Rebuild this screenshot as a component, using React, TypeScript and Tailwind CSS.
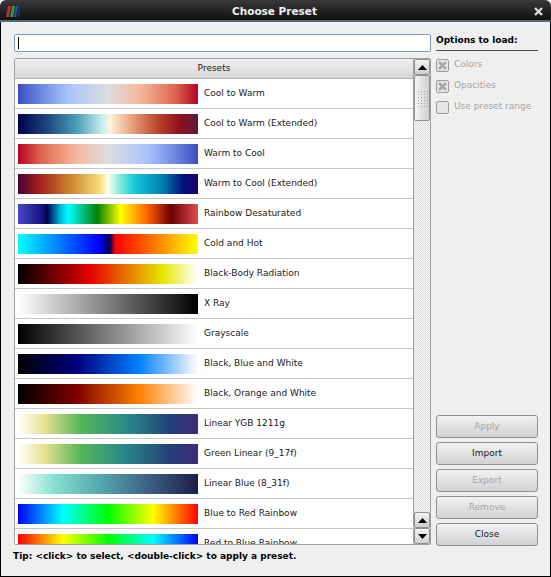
import React from 'react';

const presets = [
  {name: 'Cool to Warm', bar: 'bg-[linear-gradient(90deg,#3b4cc0_0%,#6a85e0_12%,#a9c4fd_28%,#dddddd_50%,#f5b79c_68%,#e0674f_87%,#b40426_100%)]'},
  {name: 'Cool to Warm (Extended)', bar: 'bg-[linear-gradient(90deg,#00004b_0%,#1f4a80_17%,#4fa0b8_33%,#c8eeee_47%,#fff4df_51%,#e8a27c_63%,#b8432a_78%,#8f1020_90%,#591a3a_100%)]'},
  {name: 'Warm to Cool', bar: 'bg-[linear-gradient(90deg,#b40426_0%,#e0674f_13%,#f5b79c_32%,#dddddd_50%,#a9c4fd_72%,#6a85e0_88%,#3b4cc0_100%)]'},
  {name: 'Warm to Cool (Extended)', bar: 'bg-[linear-gradient(90deg,#4a0032_0%,#a3201c_12%,#d08a30_30%,#f8e080_46%,#fffff0_50%,#9deedd_55%,#10c8d8_65%,#0080b0_80%,#00107e_92%,#200070_100%)]'},
  {name: 'Rainbow Desaturated', bar: 'bg-[linear-gradient(90deg,#4848c8_0%,#10107a_14%,#000050_16%,#00c0e0_24%,#00ffff_28%,#008000_44%,#ffff00_57%,#ff6000_72%,#6b0000_85%,#e04c4c_100%)]'},
  {name: 'Cold and Hot', bar: 'bg-[linear-gradient(90deg,#00ffff_0%,#0000ff_45%,#000050_51%,#ff0000_54%,#ffff00_100%)]'},
  {name: 'Black-Body Radiation', bar: 'bg-[linear-gradient(90deg,#000000_0%,#e60000_40%,#e6e600_80%,#ffffff_100%)]'},
  {name: 'X Ray', bar: 'bg-[linear-gradient(90deg,#ffffff_0%,#000000_100%)]'},
  {name: 'Grayscale', bar: 'bg-[linear-gradient(90deg,#000000_0%,#ffffff_100%)]'},
  {name: 'Black, Blue and White', bar: 'bg-[linear-gradient(90deg,#000000_0%,#000080_33%,#0080ff_67%,#ffffff_100%)]'},
  {name: 'Black, Orange and White', bar: 'bg-[linear-gradient(90deg,#000000_0%,#800000_33%,#ff8000_67%,#ffffff_100%)]'},
  {name: 'Linear YGB 1211g', bar: 'bg-[linear-gradient(90deg,#ffffff_0%,#e8e090_15%,#54b658_35%,#2a8a88_60%,#223f78_85%,#3f2b78_100%)]'},
  {name: 'Green Linear (9_17f)', bar: 'bg-[linear-gradient(90deg,#ffffff_0%,#e8e090_15%,#54b658_35%,#2a8a88_58%,#223f78_85%,#3f2b78_100%)]'},
  {name: 'Linear Blue (8_31f)', bar: 'bg-[linear-gradient(90deg,#ffffff_0%,#86e0d0_20%,#58a8b0_45%,#3a5a80_75%,#1c1c48_100%)]'},
  {name: 'Blue to Red Rainbow', bar: 'bg-[linear-gradient(90deg,#0000ff_0%,#00ffff_25%,#00ff00_50%,#ffff00_75%,#ff0000_100%)]'},
  {name: 'Red to Blue Rainbow', bar: 'bg-[linear-gradient(90deg,#ff0000_0%,#ffff00_25%,#00ff00_50%,#00ffff_75%,#0000ff_100%)]'},
];

const Arrow = ({down}: {down?: boolean}) => (
  <svg width="9" height="5" viewBox="0 0 9 5">
    <path d={down ? 'M0 0H9L4.5 5Z' : 'M0 5H9L4.5 0Z'} fill="#000" />
  </svg>
);

const ScrollButton = ({down}: {down?: boolean}) => (
  <div className="h-[16px] flex items-center justify-center border border-[#8f8f8f] rounded-[2px] bg-gradient-to-b from-[#f4f4f4] to-[#cfcfd2]">
    <Arrow down={down} />
  </div>
);

const Option = ({label, checked}: {label: string; checked?: boolean}) => (
  <div className="h-[14px] flex items-center gap-[5px] text-[9px] text-[#a6a6a6]">
    <div className="w-[13px] h-[13px] flex items-center justify-center border border-[#9c9c9c] rounded-[2px] bg-[#e6e6e6]">
      {checked && (
        <svg width="9" height="9" viewBox="0 0 9 9">
          <path d="M1 1L8 8M8 1L1 8" stroke="#a8a8a8" strokeWidth="2.6" />
        </svg>
      )}
    </div>
    <span>{label}</span>
  </div>
);

const ActionButton = ({label, disabled}: {label: string; disabled?: boolean}) => (
  <button
    className={`h-[23px] w-full border border-[#8f8f8f] rounded-[3px] bg-gradient-to-b from-[#f2f2f2] to-[#d2d2d5] text-[9px] ${
      disabled ? 'text-[#a6a6a6]' : 'text-[#1a1a1a]'
    }`}
  >
    {label}
  </button>
);

export default function App() {
  return (
    <div className="w-[551px] h-[577px] flex flex-col overflow-hidden bg-white font-['DejaVu_Sans',sans-serif]">
      <div className="h-[22px] shrink-0 grid grid-cols-[1fr_auto_1fr] items-center pl-[6px] pr-[8px] pt-[3px] rounded-t-[6px] bg-gradient-to-b from-[#3a3a3a] to-[#101010] border-b-2 border-[#5a6478]">
        <svg width="15" height="11" viewBox="0 0 15 11">
          <path d="M2 0H5L3 11H0Z" fill="#c03030" />
          <path d="M6 0H9L7 11H4Z" fill="#2e9a3a" />
          <path d="M10 0H12L10 11H8Z" fill="#2a4fc0" />
          <path d="M13 0H15L13 11H11Z" fill="#1f3550" />
        </svg>
        <span className="text-[10.5px] font-bold text-[#f0f0f0]">Choose Preset</span>
        <svg className="justify-self-end" width="9" height="9" viewBox="0 0 9 9">
          <path d="M1 1L8 8M8 1L1 8" stroke="#d8d8d8" strokeWidth="2.4" />
        </svg>
      </div>
      <div className="flex-1 min-h-0 bg-[#efefef] border-x border-b border-black pt-[12px] pl-[13px] pr-[12px] flex flex-col">
        <div className="flex-1 min-h-0 flex gap-[5px]">
          <div className="w-[417px] flex flex-col gap-[6px]">
            <div className="h-[18px] shrink-0 flex items-center pl-[3px] bg-white border border-[#7f9cbc] rounded-[2px]">
              <div className="w-[1px] h-[12px] bg-black" />
            </div>
            <div className="h-[487px] flex border border-[#a0a0a0] rounded-[2px] overflow-hidden">
              <div className="flex-1 min-w-0 flex flex-col bg-white">
                <div className="h-[20px] shrink-0 pt-[1px] flex items-center justify-center text-[9px] text-[#202020] bg-gradient-to-b from-[#f0f0f0] to-[#d6d6da] border-b border-[#b0b0b0]">
                  Presets
                </div>
                <div className="flex-1 min-h-0 overflow-hidden">
                  {presets.map((p) => (
                    <div key={p.name} className="h-[30px] shrink-0 flex items-center pl-[3px] gap-[6px] border-b border-[#c6c6c6]">
                      <div className={`w-[180px] h-[20px] ${p.bar}`} />
                      <span className="text-[9px] text-[#202020]">{p.name}</span>
                    </div>
                  ))}
                </div>
              </div>
              <div className="w-[17px] shrink-0 flex flex-col border-l border-[#a0a0a0] bg-[repeating-conic-gradient(#dedede_0_25%,#f5f5f5_0_50%)] bg-[length:2px_2px]">
                <ScrollButton />
                <div className="h-[46px] flex items-center justify-center border border-[#8f8f8f] rounded-[2px] bg-gradient-to-r from-[#f4f4f4] to-[#d0d0d4]">
                  <div className="w-[11px] h-[17px] bg-[radial-gradient(#a8a8a8_35%,transparent_40%)] bg-[length:3px_3px]" />
                </div>
                <div className="flex-1" />
                <ScrollButton />
                <ScrollButton down />
              </div>
            </div>
          </div>
          <div className="w-[102px] flex flex-col">
            <div className="h-[15px] mt-[-1px] text-[9px] font-bold text-black border-b border-[#505050] box-content pb-[2px] flex items-center">
              Options to load:
            </div>
            <div className="mt-[7px] flex flex-col gap-[7px]">
              <Option label="Colors" checked />
              <Option label="Opacities" checked />
              <Option label="Use preset range" />
            </div>
            <div className="flex-1" />
            <div className="flex flex-col gap-[4px]">
              <ActionButton label="Apply" disabled />
              <ActionButton label="Import" />
              <ActionButton label="Export" disabled />
              <ActionButton label="Remove" disabled />
              <ActionButton label="Close" />
            </div>
          </div>
        </div>
        <div className="h-[30px] shrink-0 pt-[4px] ml-[-1px] text-[9px] font-bold text-black">
          Tip: &lt;click&gt; to select, &lt;double-click&gt; to apply a preset.
        </div>
      </div>
    </div>
  );
}
